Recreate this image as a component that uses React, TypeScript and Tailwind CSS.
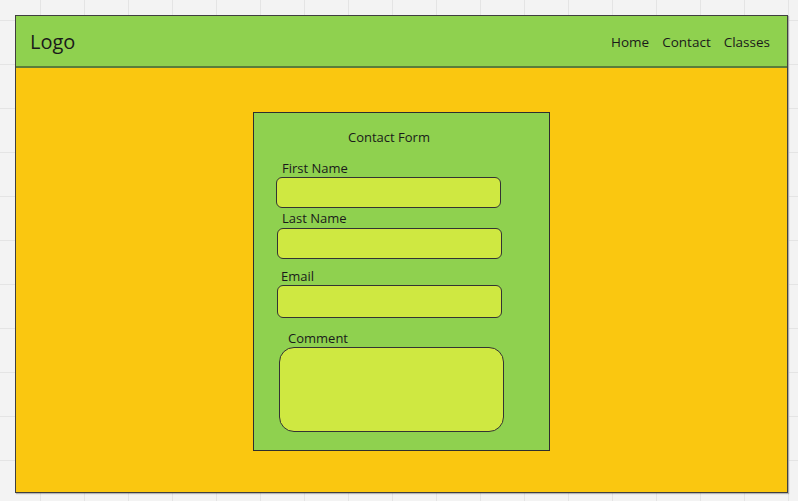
export default function App() {
  return (
    <div className="w-[798px] h-[501px] overflow-hidden bg-[#f3f3f3] bg-[linear-gradient(to_right,#e4e4e4_1px,transparent_1px),linear-gradient(to_bottom,#e4e4e4_1px,transparent_1px)] bg-[size:44px_44px] bg-[position:40px_20px] pl-[15px] pt-[15px] font-['Open_Sans',sans-serif] text-[#1a1a1a]">
      <div className="w-[773px] h-[478px] flex flex-col border border-[#3f3f3f] bg-[#fac710] shadow-[1px_1px_1px_rgba(0,0,0,0.25)]">

        <header className="h-[52px] flex items-center justify-between bg-[#8fd14f] border-b-2 border-[#5b7d3a] pl-[14px] pr-[17px] pt-[2px]">
          <span className="text-[20px] leading-none">Logo</span>
          <nav className="flex items-center gap-x-[13px] text-[13.5px]">
            <a href="#">Home</a>
            <a href="#">Contact</a>
            <a href="#">Classes</a>
          </nav>
        </header>

        <div className="flex justify-center pt-[44px]">
          <form className="w-[297px] h-[339px] flex flex-col items-start bg-[#8fd14f] border border-[#2e2e2e] pt-[16px] text-[13px] leading-[16px]">
            <p className="ml-[94px]">Contact Form</p>

            <label className="ml-[28px] mt-[15px]">First Name</label>
            <div className="ml-[22px] mt-[1px] w-[225px] h-[31px] rounded-[6px] bg-[#cfe841] border border-[#333]" />

            <label className="ml-[28px] mt-[2px]">Last Name</label>
            <div className="ml-[23px] mt-[2px] w-[225px] h-[31px] rounded-[6px] bg-[#cfe841] border border-[#333]" />

            <label className="ml-[27px] mt-[9px]">Email</label>
            <div className="ml-[23px] mt-[1px] w-[225px] h-[33px] rounded-[6px] bg-[#cfe841] border border-[#333]" />

            <label className="ml-[34px] mt-[12px]">Comment</label>
            <div className="ml-[25px] mt-[1px] w-[225px] h-[85px] rounded-[15px] bg-[#cfe841] border border-[#333]" />
          </form>
        </div>

      </div>
    </div>
  );
}
